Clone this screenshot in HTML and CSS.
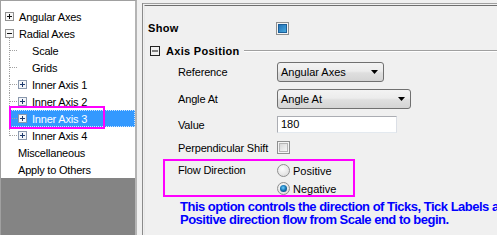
FILE: index.html
```html
<!DOCTYPE html>
<html>
<head>
<meta charset="utf-8">
<link rel="stylesheet" href="styles.css">
</head>
<body>
<div class="app">
  <div class="tree">
    <ul class="list">
      <li class="row l0"><span class="exp"><svg width="9" height="9" viewBox="0 0 9 9"><rect x="0.5" y="0.5" width="8" height="8" fill="#f7f7f7" stroke="#919191"/><path d="M2 4.5H7M4.5 2V7" stroke="#111" stroke-width="1"/></svg></span><span class="lbl">Angular Axes</span></li>
      <li class="row l0 open"><span class="exp"><svg width="9" height="9" viewBox="0 0 9 9"><rect x="0.5" y="0.5" width="8" height="8" fill="#f7f7f7" stroke="#919191"/><path d="M2 4.5H7" stroke="#111" stroke-width="1"/></svg></span><span class="lbl">Radial Axes</span></li>
      <li class="row l1"><span class="vline"></span><span class="body"><span class="hline"></span><span class="lbl leaf">Scale</span></span></li>
      <li class="row l1"><span class="vline"></span><span class="body"><span class="hline"></span><span class="lbl leaf">Grids</span></span></li>
      <li class="row l1"><span class="vline"></span><span class="body"><span class="hline"></span><span class="exp"><svg width="9" height="9" viewBox="0 0 9 9"><rect x="0.5" y="0.5" width="8" height="8" fill="#f4f6f9" stroke="#8a98ad"/><path d="M2 4.5H7M4.5 2V7" stroke="#1d3a6e" stroke-width="1"/></svg></span><span class="lbl">Inner Axis 1</span></span></li>
      <li class="row l1"><span class="vline"></span><span class="body"><span class="hline"></span><span class="exp"><svg width="9" height="9" viewBox="0 0 9 9"><rect x="0.5" y="0.5" width="8" height="8" fill="#f4f6f9" stroke="#8a98ad"/><path d="M2 4.5H7M4.5 2V7" stroke="#1d3a6e" stroke-width="1"/></svg></span><span class="lbl">Inner Axis 2</span></span></li>
      <li class="row l1"><span class="vline"></span><span class="body sel"><span class="hline"></span><span class="exp"><svg width="9" height="9" viewBox="0 0 9 9"><rect x="0.5" y="0.5" width="8" height="8" fill="#f4f6f9" stroke="#8a98ad"/><path d="M2 4.5H7M4.5 2V7" stroke="#1d3a6e" stroke-width="1"/></svg></span><span class="lbl">Inner Axis 3</span></span></li>
      <li class="row l1 last"><span class="vline"></span><span class="body"><span class="hline"></span><span class="exp"><svg width="9" height="9" viewBox="0 0 9 9"><rect x="0.5" y="0.5" width="8" height="8" fill="#f4f6f9" stroke="#8a98ad"/><path d="M2 4.5H7M4.5 2V7" stroke="#1d3a6e" stroke-width="1"/></svg></span><span class="lbl">Inner Axis 4</span></span></li>
      <li class="row l0 plain"><span class="lbl">Miscellaneous</span></li>
      <li class="row l0 plain"><span class="lbl">Apply to Others</span></li>
    </ul>
    <div class="empty"></div>
    <div class="mark mark-tree"></div>
  </div>
  <div class="split"></div>
  <div class="panel">
    <div class="panel-in">
      <div class="show">
        <span class="blbl">Show</span>
        <span class="chk on"><span class="chk-in"></span></span>
      </div>
      <div class="sect">
        <svg class="sbox" width="10" height="10" viewBox="0 0 10 10"><rect x="0.5" y="0.5" width="9" height="9" fill="none" stroke="#222"/><path d="M2 5H8" stroke="#111"/></svg>
        <span class="blbl stitle">Axis Position</span>
        <span class="sline"></span>
      </div>
      <div class="field f-ref">
        <span class="flbl">Reference</span>
        <div class="combo w1"><span>Angular Axes</span><svg class="arr" width="7" height="4" viewBox="0 0 7 4"><path d="M0 0H7L3.5 4Z" fill="#000"/></svg></div>
      </div>
      <div class="field f-angle">
        <span class="flbl">Angle At</span>
        <div class="combo w2"><span>Angle At</span><svg class="arr" width="7" height="4" viewBox="0 0 7 4"><path d="M0 0H7L3.5 4Z" fill="#000"/></svg></div>
      </div>
      <div class="field f-val">
        <span class="flbl">Value</span>
        <div class="input">180</div>
      </div>
      <div class="field f-perp">
        <span class="flbl">Perpendicular Shift</span>
        <span class="chk"><span class="chk-in off"></span></span>
      </div>
      <div class="flow">
        <span class="flbl">Flow Direction</span>
        <div class="radios">
          <div class="ropt"><span class="radio"></span><span>Positive</span></div>
          <div class="ropt"><span class="radio on"><span class="dot"></span></span><span>Negative</span></div>
        </div>
      </div>
      <div class="desc">
        <div>This option controls the direction of Ticks, Tick Labels and Title.</div>
        <div>Positive direction flow from Scale end to begin.</div>
      </div>
    </div>
  </div>
</div>
</body>
</html>
```

FILE: styles.css
```css
html, body {
  margin: 0;
  padding: 0;
  background: #f0f0f0;
  font-family: "Liberation Sans", Arial, sans-serif;
  font-size: 11px;
  color: #000;
  overflow: hidden;
}
.app {
  display: flex;
  width: 497px;
  height: 235px;
}
.tree {
  position: relative;
  width: 137px;
  height: 235px;
  box-sizing: border-box;
  border-top: 1px solid #a0a0a0;
  border-left: 1px solid #a0a0a0;
  border-right: 2px solid #b4b4b4;
  display: flex;
  flex-direction: column;
  background: #fff;
}
.list {
  list-style: none;
  margin: 0;
  padding: 7px 0 0 0;
  background: #fff;
}
.row {
  height: 17px;
  display: flex;
  align-items: center;
  white-space: nowrap;
}
.l0 { padding-left: 4px; }
.l0 .lbl { margin-left: 5px; letter-spacing: -0.2px; }
.l0.plain { padding-left: 13px; }
.l0.plain .lbl { margin-left: 4px; }
.open {
  background: repeating-linear-gradient(to bottom, #a0a0a0 0 1px, transparent 1px 2px) no-repeat 8px 13px / 1px 4px;
}
.exp { display: flex; width: 9px; height: 9px; }
.exp svg { display: block; }
.l1 { padding-left: 8px; }
.vline {
  width: 1px;
  height: 17px;
  background: repeating-linear-gradient(to bottom, #a0a0a0 0 1px, transparent 1px 2px);
}
.last .vline {
  background: repeating-linear-gradient(to bottom, #a0a0a0 0 1px, transparent 1px 2px) no-repeat 0 0 / 1px 9px;
}
.body {
  flex: 1;
  height: 17px;
  display: flex;
  align-items: center;
  box-sizing: border-box;
}
.hline {
  width: 8px;
  height: 1px;
  background: repeating-linear-gradient(to right, #a0a0a0 0 1px, transparent 1px 2px);
}
.l1 .lbl { margin-left: 5px; letter-spacing: -0.2px; }
.l1 .lbl.leaf { margin-left: 14px; }
.sel {
  background: #3399ff;
  color: #fff;
  border: 1px dotted #cfe6ff;
}
.sel .hline { margin-left: -1px; }
.empty {
  flex: 1;
  background: #848484;
}
.mark {
  position: absolute;
  border: 2px solid #ff00ff;
  box-sizing: border-box;
}
.mark-tree {
  left: 8px;
  top: 105px;
  width: 96px;
  height: 23px;
}
.split {
  width: 5px;
  border-right: 1px solid #8a8a8a;
  margin-top: 3px;
}
.panel {
  flex: 1;
  margin-top: 3px;
  border-top: 1px solid #a0a0a0;
  padding: 1px 0 0 1px;
  overflow: hidden;
}
.panel-in {
  border-top: 1px solid #6e6e6e;
  border-left: 1px solid #e8e8e8;
  height: 100%;
  padding-left: 3px;
  box-sizing: border-box;
}
.blbl {
  font-weight: bold;
  letter-spacing: 0.3px;
}
.show {
  margin-top: 13px;
  height: 18px;
  display: flex;
  align-items: center;
}
.show .chk { margin-left: 97px; }
.chk {
  width: 13px;
  height: 13px;
  box-sizing: border-box;
  border: 1px solid #8e8f8f;
  background: #f4f4f4;
  padding: 1px;
  display: flex;
}
.chk-in {
  flex: 1;
  box-sizing: border-box;
  border: 1px solid #1b5e98;
  background: linear-gradient(135deg, #2372b8, #47a8dc);
}
.chk-in.off {
  border: 1px solid #b5b5b5;
  background: linear-gradient(135deg, #d8d8d8, #f6f6f6);
}
.sect {
  margin-top: 4px;
  height: 19px;
  display: flex;
  align-items: center;
}
.sbox { margin-left: 2px; display: block; }
.stitle { margin-left: 6px; }
.sline {
  flex: 1;
  margin-left: 4px;
  height: 1px;
  background: #a0a0a0;
  border-bottom: 1px solid #fff;
}
.field {
  display: grid;
  grid-template-columns: 99px auto;
  align-items: center;
  padding-left: 30px;
}
.flbl { letter-spacing: -0.15px; }
.f-ref { margin-top: 2px; height: 20px; }
.f-angle { margin-top: 7px; height: 20px; }
.f-val { margin-top: 7px; height: 17px; }
.f-perp { margin-top: 8px; height: 13px; }
.combo {
  height: 20px;
  box-sizing: border-box;
  border: 1px solid #707070;
  border-radius: 3px;
  background: linear-gradient(to bottom, #f3f3f3 0%, #ececec 45%, #dfdfdf 55%, #d4d4d4 100%);
  display: flex;
  align-items: center;
  padding-left: 3px;
}
.w1 { width: 107px; }
.w2 { width: 134px; }
.arr { margin-left: auto; margin-right: 5px; display: block; }
.input {
  width: 120px;
  height: 17px;
  box-sizing: border-box;
  border: 1px solid #abadb3;
  border-bottom-color: #e3e9ef;
  border-right-color: #dbdfe6;
  background: #fff;
  padding-left: 3px;
  line-height: 15px;
}
.flow {
  margin: 5px 0 0 15px;
  width: 192px;
  height: 38px;
  box-sizing: border-box;
  border: 2px solid #ff00ff;
  display: grid;
  grid-template-columns: 99px auto;
  padding-left: 13px;
  padding-top: 3px;
}
.flow .flbl { line-height: 13px; }
.radios { display: flex; flex-direction: column; gap: 5px; }
.ropt { display: flex; align-items: center; height: 13px; gap: 3px; }
.radio {
  width: 13px;
  height: 13px;
  box-sizing: border-box;
  border-radius: 50%;
  border: 1px solid #8f8f8f;
  background: radial-gradient(circle at 40% 35%, #fdfdfd, #d6d6d6);
  display: flex;
  align-items: center;
  justify-content: center;
}
.radio .dot {
  width: 7px;
  height: 7px;
  border-radius: 50%;
  background: radial-gradient(circle at 45% 40%, #6fd0ff 0, #1a79b8 45%, #0b2f55 100%);
}
.desc {
  margin: 3px 0 0 32px;
  color: #0000ff;
  font-weight: bold;
  font-size: 13px;
  letter-spacing: -0.5px;
  line-height: 13px;
  white-space: nowrap;
}
```
